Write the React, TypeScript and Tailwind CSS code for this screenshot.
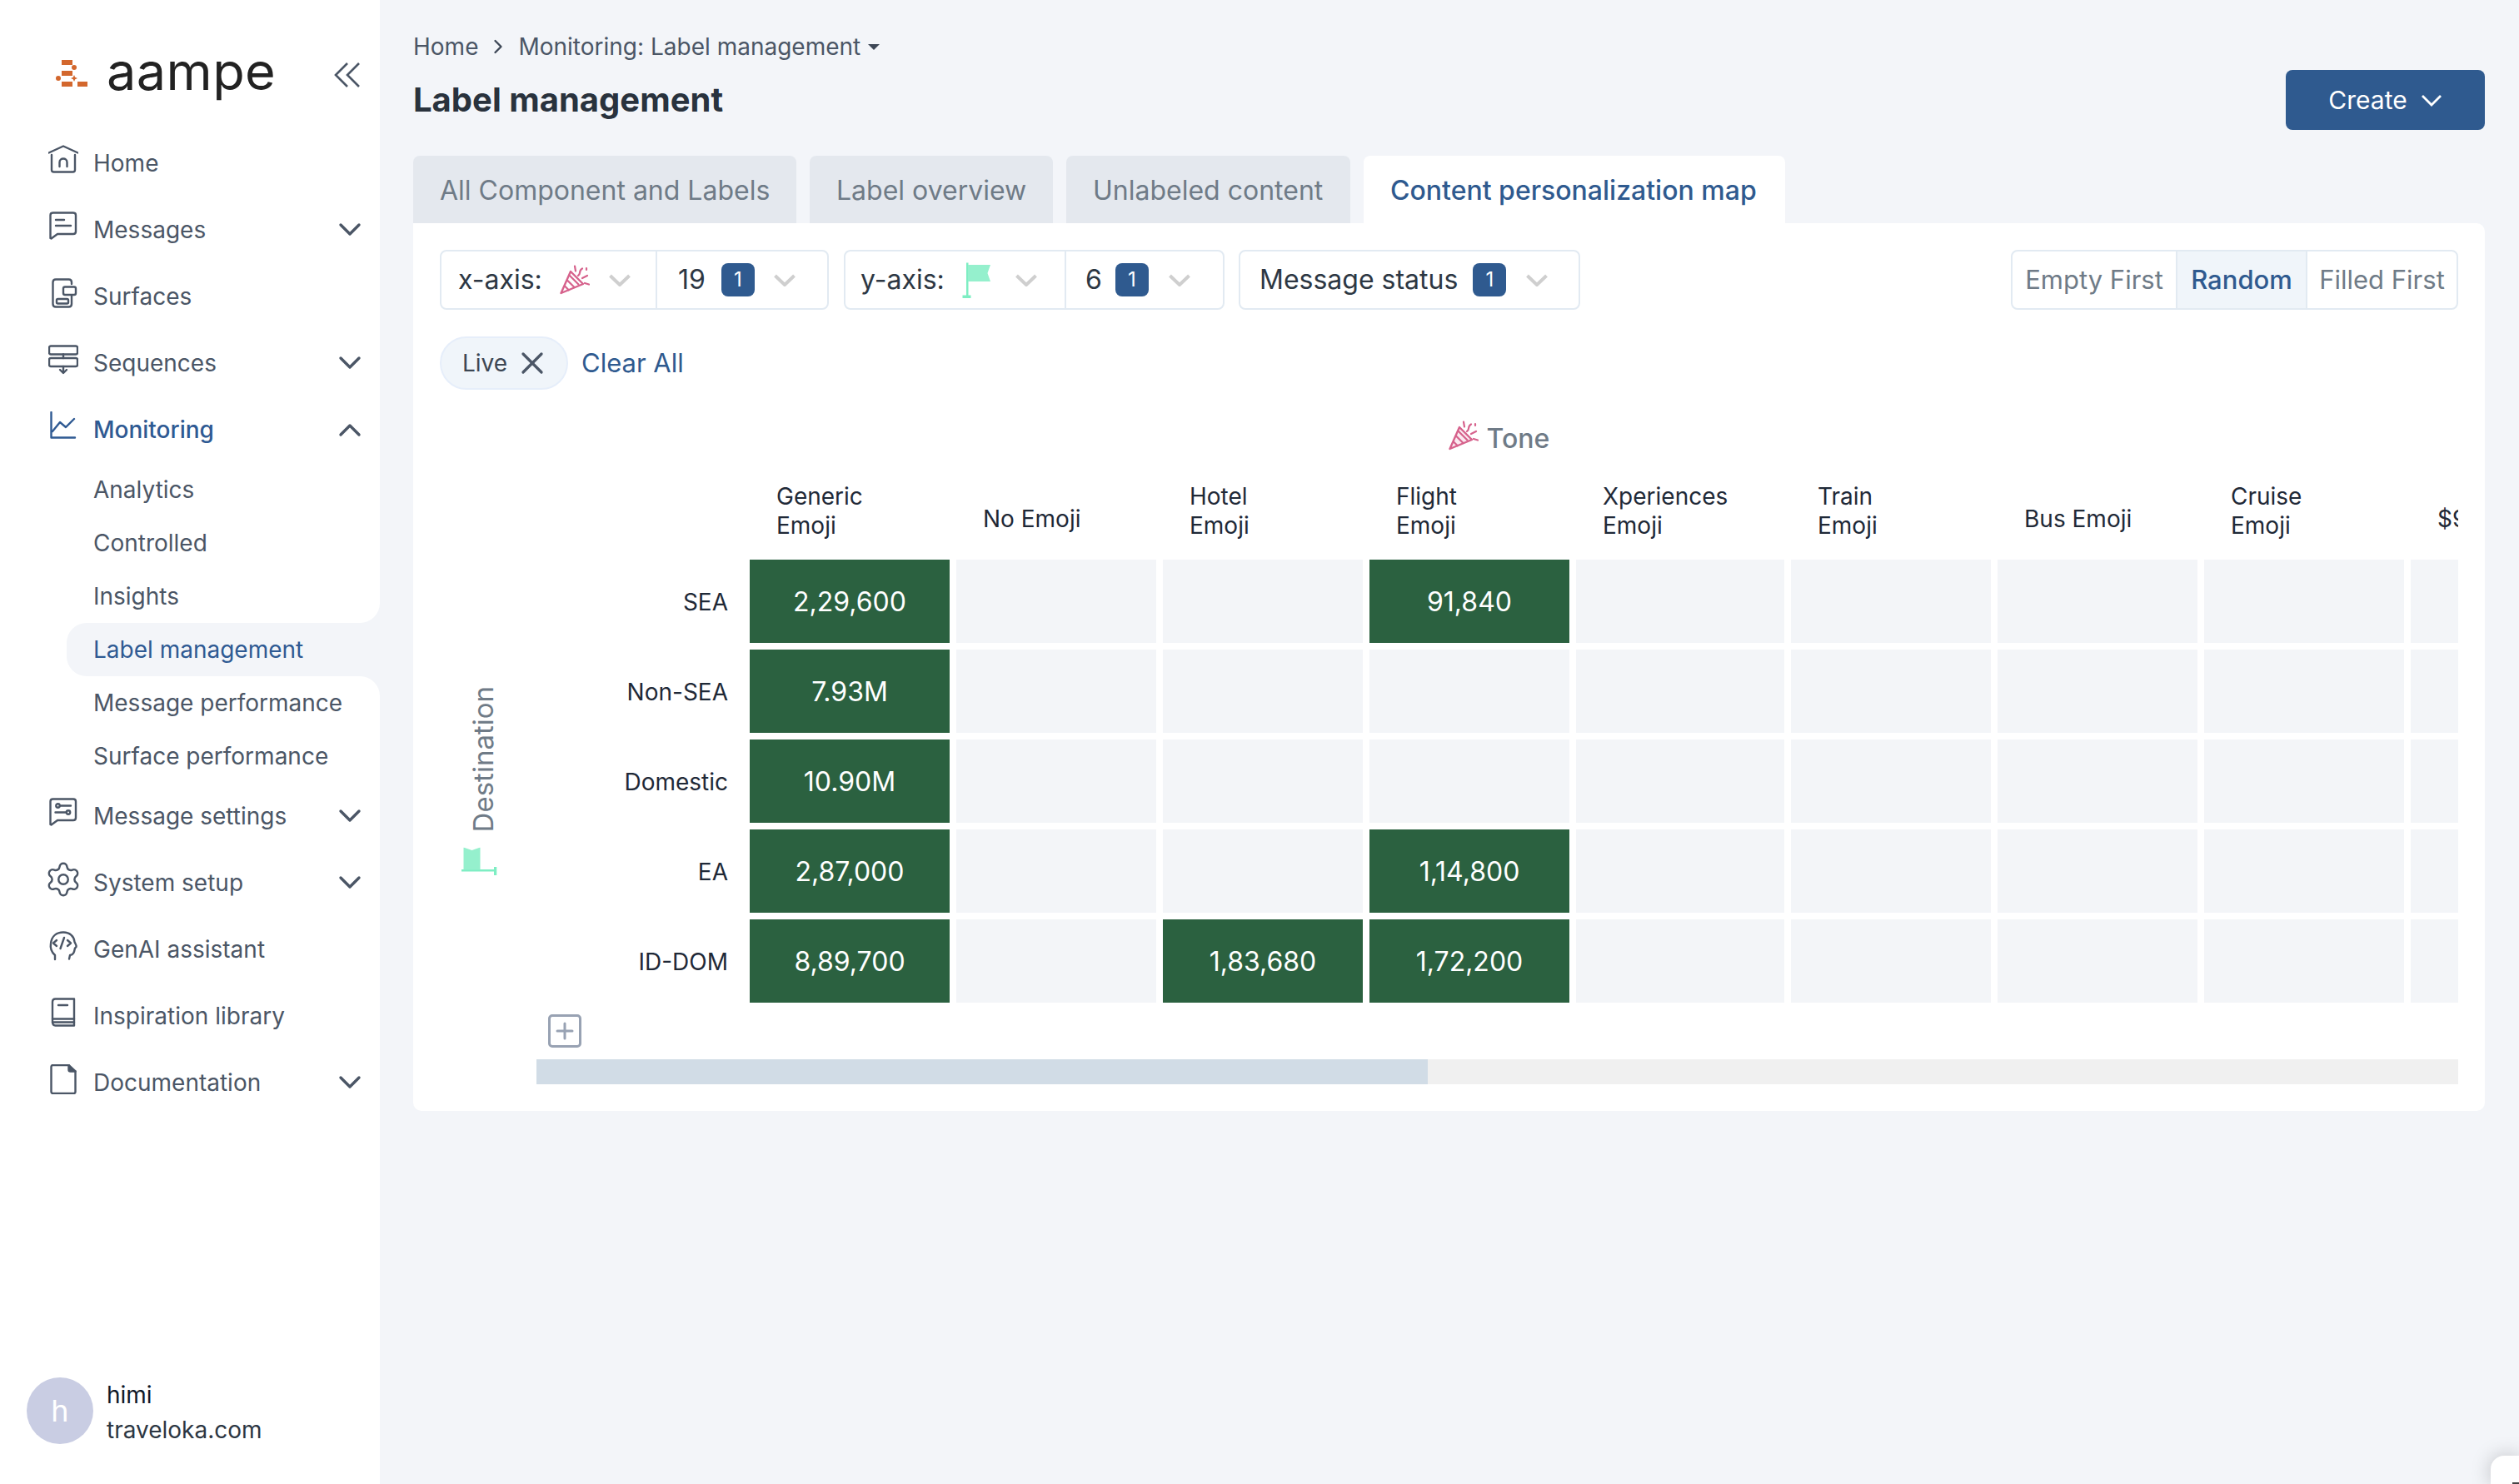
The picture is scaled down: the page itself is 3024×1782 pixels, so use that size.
import React from 'react';
import { ChevronRight, Settings, X } from 'lucide-react';

const Chev = ({ up, className }: { up?: boolean; className?: string }) => (
  <svg width="28" height="18" viewBox="0 0 28 18" fill="none" className={className}>
    <path d={up ? 'M3 15L14 4L25 15' : 'M3 3L14 14L25 3'} stroke="currentColor" strokeWidth="3.4" strokeLinecap="round" strokeLinejoin="round" />
  </svg>
);

const SelectChev = () => (
  <svg width="28" height="17" viewBox="0 0 28 17" fill="none" className="text-[#cfcfcf] shrink-0">
    <path d="M2.5 3L14 14L25.5 3" stroke="currentColor" strokeWidth="4" strokeLinejoin="round" />
  </svg>
);

const Popper = ({ size = 36, tone }: { size?: number; tone?: boolean }) => (
  <svg width={size} height={size} viewBox="0 0 36 36" fill="none" className="shrink-0">
    <path d="M1.5 34L13 8L28 23Z" fill={tone ? '#fbe9f0' : '#fff'} stroke="#d6628c" strokeWidth="2.4" strokeLinejoin="round" />
    <path d="M8.5 18L18 27.5M5.5 25L11.5 31M11.5 12.5L23 24" stroke="#d6628c" strokeWidth="2.2" />
    <path d="M18 1.5L19 7.5M22 13C26 11 22 7 27 4.5M27 16L33 13M30 22L35 23.5M32 4V6" stroke="#d6628c" strokeWidth="2.2" strokeLinecap="round" />
  </svg>
);

const Flag = ({ className }: { className?: string }) => (
  <svg width="34" height="43" viewBox="0 0 34 43" fill="none" className={`shrink-0 ${className ?? ''}`}>
    <path d="M5 0.5H7.5V40H5Z" fill="#7eeec3" />
    <path d="M0.5 39.5H10.5V43H0.5Z" fill="#7eeec3" />
    <path d="M7 3H34L30.5 13L34 23H7Z" fill="#95f0cd" />
  </svg>
);

const I = ({ children }: { children: React.ReactNode }) => (
  <svg width="36" height="36" viewBox="0 0 36 36" fill="none" stroke="currentColor" strokeWidth="2.4" strokeLinecap="round" strokeLinejoin="round">
    {children}
  </svg>
);

const icons: Record<string, React.ReactNode> = {
  home: (
    <I>
      <path d="M0.5 9.5L18 1.5L35.5 9.5" />
      <path d="M4 12V30C4 31.5 5 32.5 6.5 32.5H29.5C31 32.5 32 31.5 32 30V12" />
      <path d="M13.5 26V21C13.5 15 22.5 15 22.5 21V26" />
    </I>
  ),
  message: (
    <I>
      <path d="M2.5 4.5C2.5 2.8 3.8 1.5 5.5 1.5H30C31.7 1.5 33 2.8 33 4.5V24C33 25.7 31.7 27 30 27H11L3.5 32.5L2.5 32Z" />
      <path d="M9 10H19M9 17H27" />
    </I>
  ),
  surface: (
    <I>
      <path d="M28 7V5C28 3 26.5 1.5 24.5 1.5H9C7 1.5 5.5 3 5.5 5V31C5.5 33 7 34.5 9 34.5H24.5C26.5 34.5 28 33 28 31V21" />
      <rect x="18" y="10.5" width="15" height="9.5" rx="2" />
      <rect x="10" y="25" width="14" height="5.5" rx="1.5" />
    </I>
  ),
  sequence: (
    <I>
      <rect x="1" y="1.5" width="34" height="10" rx="2" />
      <rect x="1" y="16" width="34" height="10" rx="2" />
      <path d="M18 11.5V16M18 26V33M14 30L18 34L22 30" />
    </I>
  ),
  monitor: (
    <I>
      <path d="M3.5 1V31.5H32" />
      <path d="M5 24L14 13L21 19L31 9" />
    </I>
  ),
  msgset: (
    <I>
      <path d="M2.5 4.5C2.5 2.8 3.8 1.5 5.5 1.5H30C31.7 1.5 33 2.8 33 4.5V24C33 25.7 31.7 27 30 27H11L3.5 32.5L2.5 32Z" />
      <circle cx="11.5" cy="9.5" r="2.2" />
      <circle cx="24" cy="17.5" r="2.2" />
      <path d="M14 9.5H27M8.5 17.5H21.5" />
    </I>
  ),
  genai: (
    <I>
      <path d="M8 34V29C3.5 25 2 21 3 15C4 6 10 1.5 18 1.5C26 1.5 31 6.5 31.5 13C34 18 34.5 19 32 20.5C31 26 30 28.5 26 29L25 33.5" />
      <path d="M10 11L6 14.5L10 18M23 11L27 14.5L23 18M19 8L14.5 21" />
    </I>
  ),
  book: (
    <I>
      <path d="M5 29V5C5 3 6.5 1.5 8.5 1.5H31V33.5H8.5C6.5 33.5 5 32 5 29Z" />
      <path d="M5 25.5H31M5 29.5H31M12 9H23" />
    </I>
  ),
  doc: (
    <I>
      <path d="M3.5 3C3.5 2 4.5 1 5.5 1H24.5L32.5 8.5V33C32.5 34 31.5 35 30.5 35H5.5C4.5 35 3.5 34 3.5 33Z" />
      <path d="M24.5 1V6.5C24.5 7.5 25.5 8.5 26.5 8.5H32.5" fill="currentColor" />
    </I>
  ),
};

const navTop = [
  { label: 'Home', icon: 'home' },
  { label: 'Messages', icon: 'message', chev: true },
  { label: 'Surfaces', icon: 'surface' },
  { label: 'Sequences', icon: 'sequence', chev: true },
];
const navBottom = [
  { label: 'Message settings', icon: 'msgset', chev: true },
  { label: 'System setup', icon: 'gear', chev: true },
  { label: 'GenAI assistant', icon: 'genai' },
  { label: 'Inspiration library', icon: 'book' },
  { label: 'Documentation', icon: 'doc', chev: true },
];

function NavItem({ label, icon, chev, active }: { label: string; icon: string; chev?: boolean; active?: boolean }) {
  return (
    <div className={`h-[80px] flex items-center pl-[58px] pr-[22px] ${active ? 'text-[#2f5a93]' : 'text-[#4b5666]'}`}>
      <span className="w-[36px] h-[36px] -mt-[8px] shrink-0 flex items-center justify-center">
        {icon === 'gear' ? <Settings size={46} strokeWidth={1.3} className="shrink-0" /> : icons[icon]}
      </span>
      <span className={`ml-[18px] text-[28px] flex-1 ${active ? 'font-medium' : ''}`}>{label}</span>
      {chev && <Chev up={active} className="text-[#4b5666]" />}
    </div>
  );
}

const subs = ['Analytics', 'Controlled', 'Insights', 'Label management', 'Message performance', 'Surface performance'];

function Sidebar() {
  return (
    <aside className="w-[456px] shrink-0 h-full bg-white flex flex-col">
      <div className="h-[156px] pt-[56px] pl-[66px] pr-[22px] flex items-start justify-between shrink-0">
        <div className="flex items-center h-[64px]">
          <svg width="40" height="36" viewBox="66 72 40 36" className="shrink-0">
            <g fill="#d3672d">
              <rect x="74" y="74" width="13" height="6" />
              <circle cx="89" cy="83" r="3" />
              <rect x="74" y="87" width="13" height="6" />
              <circle cx="70" cy="96" r="3" />
              <path d="M89 92L90.2 94.8L93 96L90.2 97.2L89 100L87.8 97.2L85 96L87.8 94.8Z" />
              <rect x="74" y="100" width="13" height="6" />
              <rect x="93" y="100" width="12" height="6" />
            </g>
          </svg>
          <span className="ml-[22px] text-[63px] leading-[64px] text-[#222] -mt-[6px] tracking-[0.4px]">aampe</span>
        </div>
        <svg width="34" height="34" viewBox="0 0 34 34" fill="none" className="text-[#4b5666] mt-[17px]" stroke="currentColor" strokeWidth="2.6">
          <path d="M17 3L3 17L17 31M31 3L17 17L31 31" />
        </svg>
      </div>
      {navTop.map(n => <NavItem key={n.label} {...n} />)}
      <NavItem label="Monitoring" icon="monitor" chev active />
      {subs.map(s => {
        const isActive = s === 'Label management';
        const corner = s === 'Insights' ? 'rounded-br-[24px]' : s === 'Message performance' ? 'rounded-tr-[24px]' : '';
        return (
          <div key={s} className={`h-[64px] ${isActive || corner ? 'bg-[#f3f5f9]' : ''} ${isActive ? 'ml-[80px] rounded-l-[24px]' : ''}`}>
            <div className={`h-full flex items-center text-[28px] ${isActive ? 'pl-[32px] text-[#2f5a93]' : `pl-[112px] text-[#4b5666] bg-white ${corner}`}`}>
              {s}
            </div>
          </div>
        );
      })}
      <div className="flex-1 flex flex-col">
        {navBottom.map(n => <NavItem key={n.label} {...n} />)}
      </div>
      <div className="h-[128px] pl-[32px] flex items-start shrink-0">
        <div className="w-[80px] h-[80px] rounded-full bg-[#c9cde3] flex items-center justify-center text-white text-[36px]">h</div>
        <div className="ml-[16px] text-[28px] leading-[42px]">
          <div className="text-[#101828]">himi</div>
          <div className="text-[#2d3743]">traveloka.com</div>
        </div>
      </div>
    </aside>
  );
}

function Badge() {
  return <span className="w-[40px] h-[40px] rounded-[8px] bg-[#2f5a8f] text-white text-[24px] flex items-center justify-center shrink-0">1</span>;
}

const tabs = [
  { label: 'All Component and Labels', width: 'w-[460px]' },
  { label: 'Label overview', width: 'w-[292px]' },
  { label: 'Unlabeled content', width: 'w-[341px]' },
  { label: 'Content personalization map', width: 'w-[506px]' },
];

function Filters() {
  return (
    <div className="flex items-stretch h-[72px] text-[32px] text-[#2d3743]">
      <div className="w-[467px] border-2 border-[#e2eaf2] rounded-[8px] flex">
        <div className="w-[259px] border-r-2 border-[#e2eaf2] flex items-center pl-[20px] gap-[21px]">
          <span>x-axis:</span>
          <Popper />
          <span className="ml-[1px]"><SelectChev /></span>
        </div>
        <div className="flex items-center pl-[25px]">
          <span>19</span>
          <span className="ml-[19px]"><Badge /></span>
          <span className="ml-[22px]"><SelectChev /></span>
        </div>
      </div>
      <div className="w-[457px] ml-[18px] border-2 border-[#e2eaf2] rounded-[8px] flex">
        <div className="w-[265px] border-r-2 border-[#e2eaf2] flex items-center pl-[18px] gap-[21px]">
          <span>y-axis:</span>
          <Flag />
          <span className="ml-[8px]"><SelectChev /></span>
        </div>
        <div className="flex items-center pl-[23px]">
          <span>6</span>
          <span className="ml-[16px]"><Badge /></span>
          <span className="ml-[23px]"><SelectChev /></span>
        </div>
      </div>
      <div className="w-[410px] ml-[17px] border-2 border-[#e2eaf2] rounded-[8px] flex items-center pl-[23px]">
        <span>Message status</span>
        <span className="ml-[18px]"><Badge /></span>
        <span className="ml-[23px]"><SelectChev /></span>
      </div>
      <div className="ml-auto w-[537px] border-2 border-[#e2eaf2] rounded-[8px] flex overflow-hidden text-[31px] text-[#6f7b87]">
        <div className="w-[196px] flex items-center justify-center">Empty First</div>
        <div className="w-[158px] flex items-center justify-center bg-[#f0f5fa] border-x-2 border-[#e2eaf2] text-[#2f5a8f] font-medium">Random</div>
        <div className="flex-1 flex items-center justify-center">Filled First</div>
      </div>
    </div>
  );
}

const columns = [
  ['Generic', 'Emoji'],
  ['No Emoji'],
  ['Hotel', 'Emoji'],
  ['Flight', 'Emoji'],
  ['Xperiences', 'Emoji'],
  ['Train', 'Emoji'],
  ['Bus Emoji'],
  ['Cruise', 'Emoji'],
  ['$9'],
];

const rows: { label: string; cells: Record<number, string> }[] = [
  { label: 'SEA', cells: { 0: '2,29,600', 3: '91,840' } },
  { label: 'Non-SEA', cells: { 0: '7.93M' } },
  { label: 'Domestic', cells: { 0: '10.90M' } },
  { label: 'EA', cells: { 0: '2,87,000', 3: '1,14,800' } },
  { label: 'ID-DOM', cells: { 0: '8,89,700', 2: '1,83,680', 3: '1,72,200' } },
];

function Heatmap() {
  return (
    <div className="flex flex-1 min-h-0">
      <div className="w-[116px] shrink-0 pt-[204px] pr-[12px]">
        <div className="h-[532px] flex flex-col items-center justify-center text-[#6f7b87] text-[33px] gap-[16px]">
          <span className="[writing-mode:vertical-rl] rotate-180 leading-[36px]">Destination</span>
          <span className="w-[43px] h-[34px] mt-[2px] -ml-[10px] flex items-center justify-center">
            <Flag className="-rotate-90" />
          </span>
        </div>
      </div>
      <div className="w-[2308px] overflow-hidden">
        <div className="h-[106px] pt-[12px] pl-[4px] flex items-center justify-center gap-[10px] text-[32px] text-[#6f7b87] font-medium">
          <span className="-mt-[8px]"><Popper tone /></span>
          <span>Tone</span>
        </div>
        <div className="grid grid-cols-[248px_240px_240px_240px_240px_250px_240px_240px_240px_240px] gap-x-[8px] gap-y-[8px] w-[2450px]">
          <div className="h-[90px]" />
          {columns.map((c, i) => (
            <div key={i} className={`h-[90px] pl-[32px] flex flex-col justify-center text-[28px] leading-[35px] text-[#1f2937] ${c.length > 1 ? 'pb-[11px]' : 'pt-[8px]'}`}>
              {c.map(t => <span key={t}>{t}</span>)}
            </div>
          ))}
          {rows.map(r => (
            <React.Fragment key={r.label}>
              <div className="h-[100px] pt-[2px] flex items-center justify-end pr-[18px] text-[28px] text-[#1f2937]">{r.label}</div>
              {columns.map((_, i) => (
                <div key={i} className={`h-[100px] pt-[2px] flex items-center justify-center text-[32px] text-white ${r.cells[i] ? 'bg-[#2b6140]' : 'bg-[#f3f5f8]'}`}>
                  {r.cells[i]}
                </div>
              ))}
            </React.Fragment>
          ))}
        </div>
        <div className="mt-[14px] ml-[14px] w-[40px] h-[40px] border-[3px] border-[#98a2b3] rounded-[5px] flex items-center justify-center">
          <svg width="22" height="22" viewBox="0 0 22 22"><path d="M11 2V20M2 11H20" stroke="#98a2b3" strokeWidth="3" strokeLinecap="round" /></svg>
        </div>
        <div className="mt-[14px] h-[30px] bg-[#f0f0f0]">
          <div className="h-full w-[1070px] bg-[#d1dce6]" />
        </div>
      </div>
    </div>
  );
}

export default function App() {
  return (
    <div className="relative w-[3024px] h-[1782px] flex overflow-hidden bg-[#f3f5f9] font-[Inter,sans-serif]">
      <Sidebar />
      <main className="flex-1 min-w-0 pl-[40px] pr-[41px]">
        <div className="h-[187px] flex justify-between">
          <div>
            <div className="pt-[38px] flex items-center text-[28px] leading-[36px] text-[#4b5666]">
              <span>Home</span>
              <ChevronRight size={28} strokeWidth={2} className="mx-[10px] text-[#3d4756]" />
              <span>Monitoring: Label management</span>
              <svg width="16" height="9" viewBox="0 0 16 9" className="ml-[8px]"><path d="M1 1H15L8 8Z" fill="#3d4756" /></svg>
            </div>
            <h1 className="mt-[21px] text-[40px] leading-[50px] font-bold text-[#29323d]">Label management</h1>
          </div>
          <button className="mt-[84px] w-[239px] h-[72px] rounded-[8px] bg-[#2f5a8f] text-white text-[30px] flex items-center justify-center gap-[16px]">
            Create
            <svg width="26" height="15" viewBox="0 0 26 15" fill="none"><path d="M2 2L13 13L24 2" stroke="#fff" strokeWidth="2.8" /></svg>
          </button>
        </div>
        <div className="flex gap-[16px] h-[81px] text-[32px]">
          {tabs.map((t, i) => (
            <div
              key={t.label}
              className={`${t.width} pl-[32px] pt-[2px] rounded-t-[8px] flex items-center ${i === 3 ? 'bg-white text-[#2f5a8f] font-medium' : 'bg-[#e4e8ee] text-[#6f7b87]'}`}
            >
              {t.label}
            </div>
          ))}
        </div>
        <section className="h-[1066px] bg-white rounded-b-[10px] rounded-tr-[10px] pt-[32px] px-[32px] flex flex-col">
          <Filters />
          <div className="mt-[32px] h-[64px] flex items-center">
            <div className="h-[64px] w-[154px] rounded-full bg-[#f0f5fa] border-2 border-[#e6eefa] flex items-center pl-[25px] gap-[8px] text-[28px] text-[#3c4653]">
              Live
              <X size={44} strokeWidth={1.8} className="text-[#4b5666] shrink-0" />
            </div>
            <span className="ml-[16px] text-[31px] text-[#2f5a8f]">Clear All</span>
          </div>
          <Heatmap />
        </section>
      </main>
      <div className="absolute right-0 bottom-0 w-[34px] h-[34px] rounded-tl-[16px] bg-white shadow-[0_0_24px_rgba(0,0,0,0.22)]">
        <div className="absolute left-[26px] bottom-0 w-[8px] h-[2px] bg-[#444]" />
      </div>
    </div>
  );
}
